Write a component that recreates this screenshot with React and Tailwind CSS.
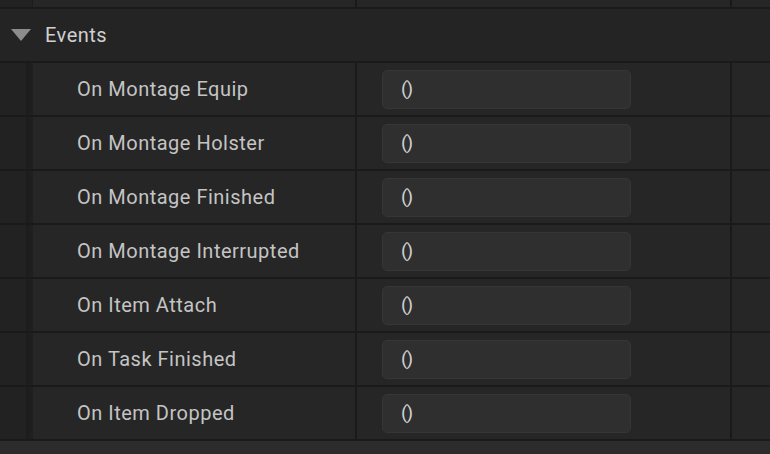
const ROWS = [
  "On Montage Equip",
  "On Montage Holster",
  "On Montage Finished",
  "On Montage Interrupted",
  "On Item Attach",
  "On Task Finished",
  "On Item Dropped",
];

function Row({ label }) {
  return (
    <div className="flex h-[52px] bg-[#262626]">
      <div className="w-[26px] shrink-0 bg-[#222222]" />
      <div className="w-[7px] shrink-0 bg-gradient-to-r from-[#1c1c1c] to-[#202020]" />
      <div className="w-[322px] shrink-0 flex items-center pl-[44px] text-[20px] tracking-[0.5px] text-[#c4c4c4]">
        {label}
      </div>
      <div className="w-[2px] shrink-0 bg-[#1a1a1a]" />
      <div className="w-[373px] shrink-0 flex items-center pl-[25px]">
        <div className="w-[249px] h-[39px] rounded-[5px] border border-[#363636] bg-[#2f2f2f] flex items-center pl-[18px] text-[19px] text-[#cfcfcf] tracking-[-1px]">
          ()
        </div>
      </div>
      <div className="w-[2px] shrink-0 bg-[#1a1a1a]" />
      <div className="flex-1" />
    </div>
  );
}

export default function App() {
  return (
    <div className="w-[770px] h-[454px] overflow-hidden bg-[#1a1a1a] flex flex-col gap-[2px]" style={{ fontFamily: "Roboto, 'Liberation Sans', sans-serif" }}>
      {/* previous row tail */}
      <div className="flex h-[7px] bg-[#262626] shrink-0">
        <div className="w-[32px] shrink-0 bg-[#222222]" />
        <div className="w-[1px] shrink-0 bg-[#1c1c1c]" />
        <div className="w-[322px] shrink-0" />
        <div className="w-[2px] shrink-0 bg-[#1a1a1a]" />
        <div className="w-[373px] shrink-0" />
        <div className="w-[2px] shrink-0 bg-[#1a1a1a]" />
        <div className="flex-1" />
      </div>

      {/* Category header */}
      <div className="flex items-center h-[52px] shrink-0 bg-[#242424]">
        <svg width="20" height="12" viewBox="0 0 20 12" className="ml-[11px]">
          <path d="M0 0 H20 L10 12 Z" fill="#8c8c8c" />
        </svg>
        <span className="ml-[14px] text-[20px] tracking-[0.5px] text-[#d0d0d0]">Events</span>
      </div>

      {ROWS.map(r => <Row key={r} label={r} />)}

      <div className="flex-1 bg-[#2c2c2c]" />
    </div>
  );
}
